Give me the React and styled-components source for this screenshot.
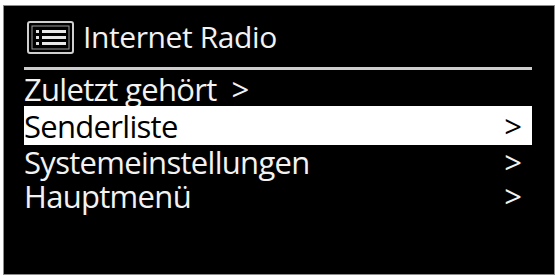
import React from "react";
import styled, { createGlobalStyle } from "styled-components";

const GlobalStyle = createGlobalStyle`
  html, body {
    margin: 0;
    padding: 0;
    background: #ffffff;
  }
  body {
    font-family: "Open Sans", "Liberation Sans", sans-serif;
  }
`;

const items = [
  { label: "Zuletzt gehört", inline: true },
  { label: "Senderliste", selected: true },
  { label: "Systemeinstellungen" },
  { label: "Hauptmenü" },
];

function MenuIcon() {
  return (
    <svg width="47" height="33" viewBox="0 0 47 33">
      <rect x="1" y="1" width="45" height="31" rx="2" fill="none" stroke="#cfcfcf" strokeWidth="2" />
      <rect x="5" y="5" width="37" height="23" fill="none" stroke="#9a9a9a" strokeWidth="1" />
      <rect x="9" y="9" width="3" height="3" fill="#e0e0e0" />
      <rect x="9" y="15" width="3" height="3" fill="#e0e0e0" />
      <rect x="9" y="21" width="3" height="3" fill="#e0e0e0" />
      <rect x="15" y="9" width="24" height="3" fill="#e8e8e8" />
      <rect x="15" y="15" width="24" height="3" fill="#e8e8e8" />
      <rect x="15" y="21" width="24" height="3" fill="#e8e8e8" />
    </svg>
  );
}

function App() {
  return (
    <>
      <GlobalStyle />
      <Screen>
        <Header>
          <MenuIcon />
          <Title>Internet Radio</Title>
        </Header>
        <Divider />
        <Menu>
          {items.map((item) => (
            <Row key={item.label} selected={item.selected} inline={item.inline}>
              <Label>{item.label}</Label>
              <Chevron inline={item.inline}>&gt;</Chevron>
            </Row>
          ))}
        </Menu>
      </Screen>
    </>
  );
}

export default App;

const Screen = styled.div`
  box-sizing: border-box;
  margin: 5px 1px 1px 3px;
  height: 270px;
  background: #000;
  border: 1px solid #8c8c8c;
  padding: 0 22px 0 20px;
  color: #f2f2f2;
`;

const Header = styled.div`
  display: flex;
  align-items: center;
  gap: 9px;
  height: 60px;
  padding-left: 3px;
  padding-top: 1px;
`;

const Title = styled.span`
  font-size: 30px;
  line-height: 36px;
  letter-spacing: -0.4px;
`;

const Divider = styled.div`
  height: 3px;
  background: #cdcdcd;
`;

const Menu = styled.div`
  display: flex;
  flex-direction: column;
  padding-top: 2px;
`;

const Row = styled.div`
  display: flex;
  align-items: center;
  justify-content: ${(p) => (p.inline ? "flex-start" : "space-between")};
  height: ${(p) => (p.selected ? "39px" : "34px")};
  padding: 0 10px 0 0;
  background: ${(p) => (p.selected ? "#fff" : "transparent")};
  color: ${(p) => (p.selected ? "#000" : "#f2f2f2")};
  font-size: 31px;
  line-height: 34px;
`;

const Label = styled.span`
  letter-spacing: -0.7px;
`;

const Chevron = styled.span`
  margin-left: ${(p) => (p.inline ? "15px" : "0")};
`;
